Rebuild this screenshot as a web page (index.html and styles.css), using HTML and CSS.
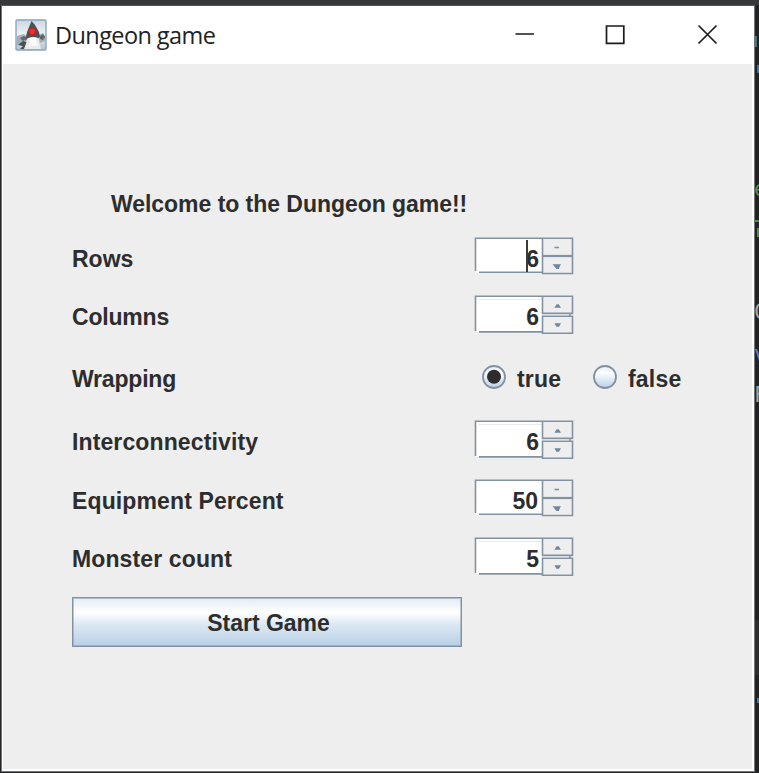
FILE: index.html
```html
<!DOCTYPE html>
<html lang="en">
<head>
<meta charset="utf-8">
<title>Dungeon game</title>
<link rel="stylesheet" href="styles.css">
</head>
<body>
<svg class="defs" width="0" height="0" aria-hidden="true">
  <defs>
    <linearGradient id="radio-fill" x1="0" y1="0" x2="0" y2="1">
      <stop offset="0" stop-color="#e4edf7"/><stop offset=".3" stop-color="#fdfeff"/><stop offset="1" stop-color="#b9d0e7"/>
    </linearGradient>
    <linearGradient id="icon-fill" x1="0" y1="0" x2="0" y2="1">
      <stop offset="0" stop-color="#ccd7e1"/><stop offset=".45" stop-color="#eceff2"/><stop offset="1" stop-color="#b5c2cf"/>
    </linearGradient>
    <symbol id="spin-flat" viewBox="0 0 100 40">
      <path fill="#fff" d="M2 1h66v35H2z"/>
      <g fill="none" stroke="#8292a2" stroke-width="1.6">
        <path d="M1.5 34V1.2H98.5V36.5H68.5V1.2M5 35.2H68.5"/>
        <path stroke-width="2.2" d="M68 19H99"/>
        <path d="M80.5 10.5H85"/>
      </g>
      <path fill="#71879c" d="M78.5 27.3h8.5l-1.2 2-1 2.7h-2.3z"/>
    </symbol>
    <symbol id="spin-full" viewBox="0 0 100 40">
      <path fill="#fff" d="M2 1h66v36H2z"/>
      <path fill="#fafafa" d="M69 18h30v3H69z"/>
      <path stroke="#eaeaea" d="M5 4.5H68"/>
      <g fill="none" stroke="#8292a2" stroke-width="1.6">
        <path d="M1.5 36V1.2H98.5V18.4H68.5V1.2M5 36.9H68.5"/>
        <path d="M68.5 21.2H98.5V38.3H68.5zM96 18.5v2.6"/>
      </g>
      <path fill="#71879c" d="M80.4 12.8h6.6l-2.3-3.6h-2zM80.4 28.2h6.6l-2 3.6h-2.6z"/>
    </symbol>
  </defs>
</svg>
<div class="desktop">
  <main class="window">
    <header class="titlebar">
      <svg class="app-icon" viewBox="0 0 32 32">
        <rect x="1" y="1" width="30" height="30" rx="1" fill="url(#icon-fill)" stroke="#8ba5bd" stroke-width="1.4"/>
        <path fill="#a7afb6" d="M2 17l7-2 3 3-2 7-8 1zM23 16l5-2 2 3v5l-5 2z"/>
        <path fill="#4b5155" d="M16.5 2 20 6l4 7 1 5-3 2-9-1-3 3 2-9z"/>
        <path fill="#5f676d" d="M5 19l4-2 3 2-4 3zM25 17l3-2 2 3-2 3-3-1z"/>
        <path fill="#4a4f52" d="M3 26l5-4 6 2-2 6H5l3-3z"/>
        <path fill="#e9eaea" d="M9 30l4-11q6-2 10 0l3 11z"/>
        <path fill="#fafafa" d="M15 19q4-1 6 0l2 7-9 2z"/>
        <circle cx="17.5" cy="12.8" r="4" fill="#b32626"/>
        <circle cx="17.2" cy="12.4" r="2.8" fill="#ed2e2e"/>
      </svg>
      <h1 class="title">Dungeon game</h1>
      <svg class="controls" viewBox="0 0 210 30" fill="none" stroke="#1b1b1b" stroke-width="1.7">
        <path d="M5.5 14H24M96.5 6h17.3v17.3H96.5z"/>
        <path d="m188.5 5.5 18 18m0-18-18 18"/>
      </svg>
    </header>
    <form class="form">
      <p class="welcome">Welcome to the Dungeon game!!</p>
      <div class="row"><span class="label">Rows</span>
        <div class="spinner"><svg class="frame"><use href="#spin-flat"/></svg><span class="value">6</span><i class="caret"></i></div></div>
      <div class="row"><span class="label tight">Columns</span>
        <div class="spinner"><svg class="frame"><use href="#spin-full"/></svg><span class="value">6</span></div></div>
      <div class="row"><span class="label tight">Wrapping</span>
        <div class="radios">
          <svg class="radio" viewBox="0 0 26 26"><circle cx="13" cy="13" r="11" fill="url(#radio-fill)" stroke="#8292a2" stroke-width="1.8"/><circle cx="13" cy="12.8" r="7" fill="#2d2d2d"/></svg>
          <span class="choice">true</span>
          <svg class="radio" viewBox="0 0 26 26"><circle cx="13" cy="13" r="11" fill="url(#radio-fill)" stroke="#8292a2" stroke-width="1.8"/></svg>
          <span class="choice">false</span>
        </div></div>
      <div class="row"><span class="label loose">Interconnectivity</span>
        <div class="spinner"><svg class="frame"><use href="#spin-full"/></svg><span class="value">6</span></div></div>
      <div class="row"><span class="label loose">Equipment Percent</span>
        <div class="spinner"><svg class="frame"><use href="#spin-flat"/></svg><span class="value wide">50</span></div></div>
      <div class="row"><span class="label loose">Monster count</span>
        <div class="spinner"><svg class="frame"><use href="#spin-full"/></svg><span class="value">5</span></div></div>
      <button class="start" type="button">Start Game</button>
    </form>
  </main>
  <svg class="editor" viewBox="0 0 4 773">
    <path fill="#2d2e2f" d="M0 620h4v55H0z"/>
    <path fill="#3f7484" d="M0 36h2v11H0z"/>
    <path fill="#3976b5" d="M2 65h2v8H2z"/>
    <path fill="#568f4c" d="M0 220h4v2H0zM2 228h2v9H2z"/>
    <path fill="#477aa0" d="M2 698h2v5H2z"/>
    <g class="code"><text x="-1" y="196" fill="#568f4c">e</text><text x="-1" y="319" fill="#a1a8ae">C</text><text x="-1" y="361" fill="#5789b8">v</text><text x="-1" y="402" fill="#a1a8ae">F</text></g>
  </svg>
</div>
</body>
</html>
```
FILE: styles.css
```css
* { box-sizing: border-box; }

body {
  margin: 0;
  height: 773px;
  overflow: hidden;
  background: #222324;
  color: #2d2d2d;
  font: bold 23px/28px "Liberation Sans", Arial, sans-serif;
}

.defs { display: block; }

.desktop {
  display: flex;
  height: 773px;
  padding-left: 1px;
  border-top: 5px solid #363839;
}

.window {
  display: flex;
  flex-direction: column;
  width: 754px;
  height: 767px;
  border: 1px solid #777;
  border-top-color: #555;
  background: #fff;
}

.titlebar {
  display: flex;
  align-items: center;
  flex: none;
  height: 58px;
  padding-left: 13px;
}

.app-icon { width: 32px; height: 32px; margin-top: -1px; }

.title {
  margin: 0 0 0 8px;
  color: #222;
  font: 400 23.5px/32px "Open Sans", "Noto Sans", sans-serif;
  letter-spacing: -0.58px;
  white-space: nowrap;
}

.controls {
  width: 210px;
  height: 30px;
  margin-left: auto;
  margin-right: 34px;
}

.form {
  display: grid;
  grid-template-rows: 52px 58px 63px 62px 59px 58px 60px 50px;
  flex: 1;
  align-content: start;
  margin: 0 2px 2px 1px;
  padding: 121px 0 0 69px;
  background: #eee;
}

.welcome {
  margin: 0;
  padding: 5px 0 0 39px;
  letter-spacing: -0.04px;
  white-space: nowrap;
}

.row {
  display: grid;
  grid-template-columns: 402px 1fr;
  align-items: start;
}

.label { padding-top: 8px; white-space: nowrap; }
.tight { letter-spacing: -0.2px; }
.loose { letter-spacing: 0.12px; }

.spinner {
  display: grid;
  width: 100px;
  height: 40px;
}

.frame, .value, .caret { grid-area: 1 / 1; }
.frame { width: 100px; height: 40px; }

.value {
  align-self: start;
  justify-self: end;
  margin: 2px 35px 0 0;
  padding-top: 6px;
}

.wide { margin-right: 36px; }

.caret {
  width: 2px;
  height: 32px;
  margin: 3px 0 0 52px;
  background: #3c3c3c;
}

.radios { display: flex; align-items: center; padding: 6px 0 0 7px; }
.radio { width: 26px; height: 26px; margin-top: -4px; }
.choice { width: 76px; padding: 1px 0 0 10px; margin-right: 9px; letter-spacing: 0.2px; }
.row:has(.radios) .label { padding-top: 7px; }

.start {
  width: 390px;
  height: 50px;
  padding: 2px 0 0 3px;
  border: 1px solid #8292a2;
  box-shadow: inset 0 0 0 1px #8292a280;
  background: linear-gradient(#e1ebf6, #fff 30%, #dce8f3 55%, #b9d0e6);
  color: inherit;
  font: inherit;
}

.editor { flex: none; width: 4px; height: 773px; margin-top: -5px; }
.code { font: 21px "DejaVu Sans Mono", monospace; }
```
